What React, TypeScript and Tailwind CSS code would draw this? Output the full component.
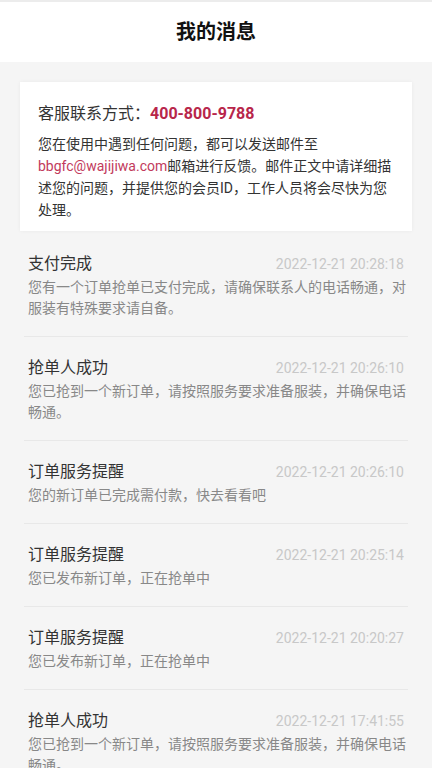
import React from 'react';

interface Message {
  id: number;
  title: string;
  time: string;
  content: string;
}

const messages: Message[] = [
  {
    id: 1,
    title: '支付完成',
    time: '2022-12-21 20:28:18',
    content: '您有一个订单抢单已支付完成，请确保联系人的电话畅通，对服装有特殊要求请自备。',
  },
  {
    id: 2,
    title: '抢单人成功',
    time: '2022-12-21 20:26:10',
    content: '您已抢到一个新订单，请按照服务要求准备服装，并确保电话畅通。',
  },
  {
    id: 3,
    title: '订单服务提醒',
    time: '2022-12-21 20:26:10',
    content: '您的新订单已完成需付款，快去看看吧',
  },
  {
    id: 4,
    title: '订单服务提醒',
    time: '2022-12-21 20:25:14',
    content: '您已发布新订单，正在抢单中',
  },
  {
    id: 5,
    title: '订单服务提醒',
    time: '2022-12-21 20:20:27',
    content: '您已发布新订单，正在抢单中',
  },
  {
    id: 6,
    title: '抢单人成功',
    time: '2022-12-21 17:41:55',
    content: '您已抢到一个新订单，请按照服务要求准备服装，并确保电话畅通。',
  },
];

const App: React.FC = () => {
  return (
    <div
      className="min-h-screen bg-[#f5f5f5] border-t-2 border-[#ececec]"
      style={{ fontFamily: 'Roboto, "Noto Sans CJK SC", sans-serif' }}
    >
      {/* Header */}
      <div className="h-[60px] bg-white flex items-center justify-center">
        <h1 className="text-[20px] font-bold text-[#111]">我的消息</h1>
      </div>

      {/* Contact card */}
      <div className="mx-5 mt-5 bg-white px-[18px] pt-5 pb-[10px] shadow-[0_0_4px_rgba(0,0,0,0.05)]">
        <div className="text-[16px] leading-6 text-[#333]">
          客服联系方式：<span className="font-bold text-[#b8264a]">400-800-9788</span>
        </div>
        <p className="mt-[7px] text-[14px] leading-[22px] text-[#333]">
          您在使用中遇到任何问题，都可以发送邮件至
          <span className="text-[#c23a5c]">bbgfc@wajijiwa.com</span>
          邮箱进行反馈。邮件正文中请详细描述您的问题，并提供您的会员ID，工作人员将会尽快为您处理。
        </p>
      </div>

      {/* Message list */}
      <div className="mt-[2px]">
        {messages.map((msg) => (
          <div key={msg.id} className="mx-6 border-b border-[#e8e8e8] pl-1 pt-[19px] pb-[17px]">
            <div className="flex items-center justify-between pr-1">
              <span className="text-[16px] leading-6 text-[#333]">{msg.title}</span>
              <span className="text-[14px] leading-6 text-[#c8c8c8]">{msg.time}</span>
            </div>
            <p className="mt-px text-[14px] leading-[21px] text-[#888]">{msg.content}</p>
          </div>
        ))}
      </div>
    </div>
  );
};

export default App;
